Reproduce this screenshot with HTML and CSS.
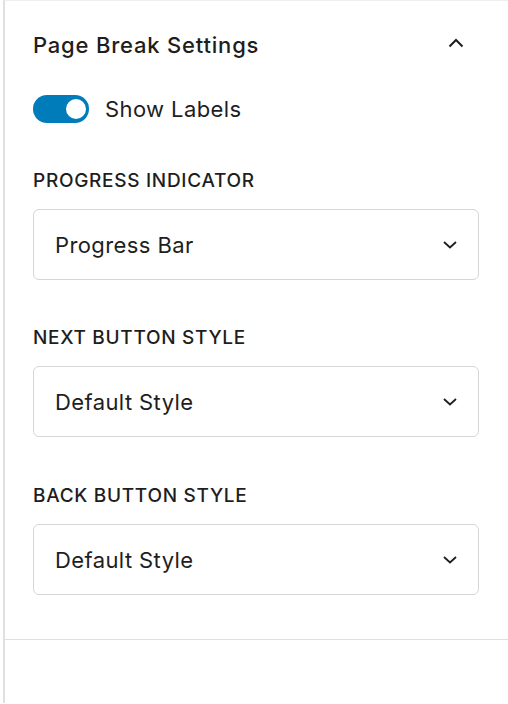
FILE: index.html
```html
<!DOCTYPE html>
<html>
<head>
<meta charset="utf-8">
<link rel="stylesheet" href="styles.css">
</head>
<body>
<div class="panel">
  <div class="header">
    <h2 class="title">Page Break Settings</h2>
    <svg class="chev-up" width="16" height="10" viewBox="0 0 16 10"><path d="M1.5 8.5 L8 2 L14.5 8.5" fill="none" stroke="#1e1e1e" stroke-width="2"/></svg>
  </div>
  <div class="toggle-row">
    <span class="toggle"><span class="knob"></span></span>
    <span class="toggle-label">Show Labels</span>
  </div>
  <div class="field">
    <div class="label">PROGRESS INDICATOR</div>
    <div class="select"><span>Progress Bar</span><svg class="chev" width="14" height="8" viewBox="0 0 14 8"><path d="M1 1 L7 6.5 L13 1" fill="none" stroke="#1e1e1e" stroke-width="1.8"/></svg></div>
  </div>
  <div class="field">
    <div class="label">NEXT BUTTON STYLE</div>
    <div class="select"><span>Default Style</span><svg class="chev" width="14" height="8" viewBox="0 0 14 8"><path d="M1 1 L7 6.5 L13 1" fill="none" stroke="#1e1e1e" stroke-width="1.8"/></svg></div>
  </div>
  <div class="field field-last">
    <div class="label">BACK BUTTON STYLE</div>
    <div class="select"><span>Default Style</span><svg class="chev" width="14" height="8" viewBox="0 0 14 8"><path d="M1 1 L7 6.5 L13 1" fill="none" stroke="#1e1e1e" stroke-width="1.8"/></svg></div>
  </div>
  <div class="divider"></div>
</div>
</body>
</html>
```
FILE: styles.css
```css
html, body {
  margin: 0;
  padding: 0;
  background: #fff;
}
body {
  font-family: Inter, "Noto Sans", sans-serif;
  color: #1e1e1e;
}
.panel {
  margin-left: 3px;
  border-left: 2px solid #e0e0e0;
  border-top: 1px solid #eeeeee;
  height: 703px;
  box-sizing: border-box;
}
.header {
  height: 87px;
  display: flex;
  align-items: center;
  justify-content: space-between;
  padding: 0 44px 0 28px;
}
.title {
  margin: 0;
  font-size: 22px;
  font-weight: 500;
  letter-spacing: 0.8px;
}
.chev-up {
  display: block;
  margin-top: -4px;
}
.toggle-row {
  margin-top: 7px;
  padding-left: 28px;
  display: flex;
  align-items: center;
  height: 28px;
}
.toggle {
  width: 56px;
  height: 28px;
  border-radius: 14px;
  background: #007cba;
  position: relative;
  box-sizing: border-box;
}
.knob {
  position: absolute;
  right: 3px;
  top: 4px;
  width: 20px;
  height: 20px;
  border-radius: 50%;
  background: #fff;
}
.toggle-label {
  margin-left: 16px;
  font-size: 22px;
  letter-spacing: 0.4px;
}
.field {
  margin-top: 48px;
  padding: 0 29px 0 28px;
}
.field-last {
  margin-top: 49px;
}
.label {
  height: 20px;
  line-height: 20px;
  font-size: 19px;
  font-weight: 500;
  letter-spacing: 0.7px;
}
.select {
  margin-top: 18px;
  height: 71px;
  box-sizing: border-box;
  border: 1px solid #d6d6d6;
  border-radius: 6px;
  display: flex;
  align-items: center;
  justify-content: space-between;
  padding: 0 21px 0 21px;
  font-size: 22px;
  letter-spacing: 0.4px;
}
.chev {
  display: block;
}
.divider {
  margin-top: 44px;
  border-top: 1px solid #e0e0e0;
}
```
